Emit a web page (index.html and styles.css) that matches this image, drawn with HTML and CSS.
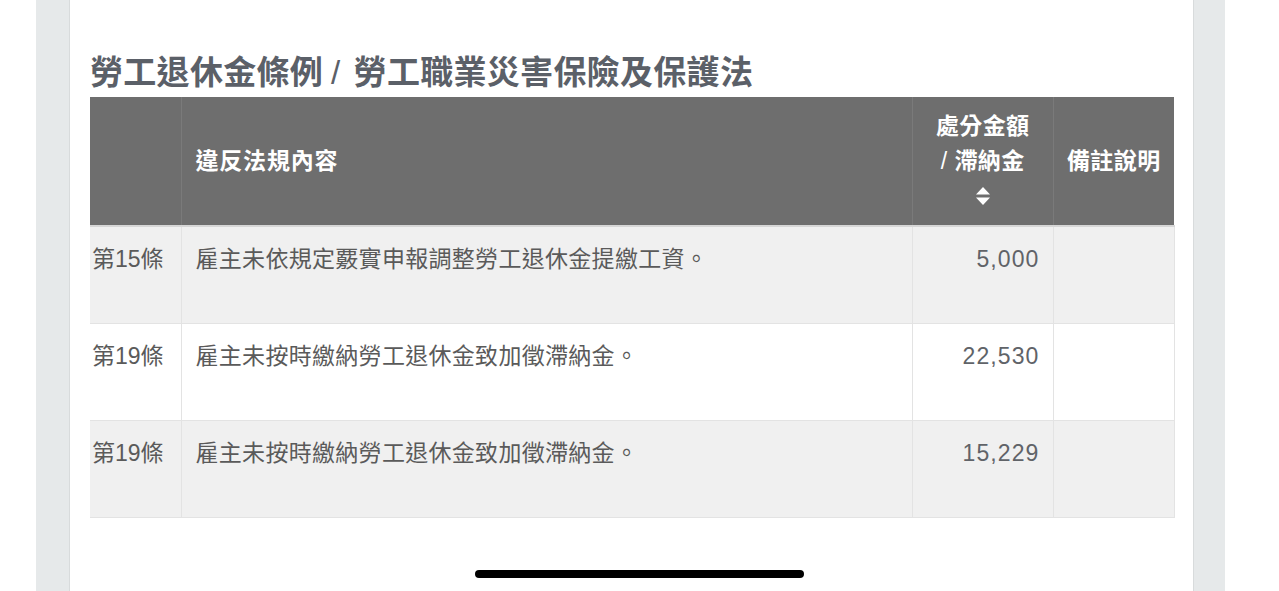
FILE: index.html
```html
<!DOCTYPE html>
<html lang="zh-Hant">
<head>
<meta charset="utf-8">
<title>勞工退休金條例 / 勞工職業災害保險及保護法</title>
<link rel="stylesheet" href="styles.css">
</head>
<body>
<div class="page">
  <div class="gutter-white"></div>
  <div class="strip"></div>
  <main class="card">
    <h2 class="title">勞工退休金條例<span class="sep">/</span>勞工職業災害保險及保護法</h2>
    <table class="penalty">
      <colgroup>
        <col class="c-art"><col class="c-desc"><col class="c-amt"><col class="c-note">
      </colgroup>
      <thead>
        <tr>
          <th class="h-art"></th>
          <th class="h-desc">違反法規內容</th>
          <th class="h-amt"><span class="amt-label">處分金額<br><span class="slash">/</span> 滯納金<br><svg class="sort" width="14" height="18" viewBox="0 0 14 18"><path d="M7 0 L14 7.5 H0 Z" fill="#fff"/><path d="M0 10.5 H14 L7 18 Z" fill="#fff"/></svg></span></th>
          <th class="h-note">備註說明</th>
        </tr>
      </thead>
      <tbody>
        <tr class="shade">
          <td class="art">第15條</td>
          <td class="desc">雇主未依規定覈實申報調整勞工退休金提繳工資。</td>
          <td class="amt">5,000</td>
          <td class="note"></td>
        </tr>
        <tr>
          <td class="art">第19條</td>
          <td class="desc">雇主未按時繳納勞工退休金致加徵滯納金。</td>
          <td class="amt">22,530</td>
          <td class="note"></td>
        </tr>
        <tr class="shade">
          <td class="art">第19條</td>
          <td class="desc">雇主未按時繳納勞工退休金致加徵滯納金。</td>
          <td class="amt">15,229</td>
          <td class="note"></td>
        </tr>
      </tbody>
    </table>
  </main>
  <div class="strip strip-right"></div>
  <div class="gutter-white"></div>
</div>
<div class="home-indicator"></div>
</body>
</html>
```
FILE: styles.css
```css
html, body {
  margin: 0;
  padding: 0;
  background: #ffffff;
  height: 591px;
  overflow: hidden;
}
body {
  font-family: "Liberation Sans", "Noto Sans CJK TC", sans-serif;
}
.page {
  display: flex;
  height: 591px;
}
.gutter-white {
  width: 36px;
  flex: none;
  background: #ffffff;
}
.gutter-white:last-child {
  flex: 1;
}
.strip {
  width: 33px;
  flex: none;
  background: #e6e9ea;
  border-right: 1px solid #d8dbdc;
}
.strip-right {
  width: 31px;
  border-right: none;
  border-left: 1px solid #d8dbdc;
}
.card {
  width: 1123px;
  flex: none;
  background: #ffffff;
  padding: 52px 19px 0 20px;
  box-sizing: border-box;
}
.title {
  margin: 0 0 4px 0;
  font-size: 33px;
  line-height: 41px;
  font-weight: 700;
  color: #5b6068;
  white-space: nowrap;
  letter-spacing: 0.3px;
}
.title .sep {
  font-weight: 400;
  padding: 0 13px 0 8px;
}
.penalty {
  width: 1084px;
  border-collapse: collapse;
  table-layout: fixed;
  font-size: 23px;
}
.c-art { width: 91px; }
.c-desc { width: 731px; }
.c-amt { width: 141px; }
.c-note { width: 121px; }
.penalty thead tr {
  height: 129px;
}
.penalty th {
  background: #6e6e6e;
  color: #ffffff;
  font-weight: 700;
  letter-spacing: 0.8px;
  line-height: 34.5px;
  vertical-align: middle;
  padding: 0 14px;
  border-left: 1px solid #7a7a7a;
  border-bottom: 2px solid #d6d6d6;
}
.penalty th.h-art { border-left: none; }
.penalty th.h-desc { text-align: left; }
.penalty th.h-amt {
  text-align: right;
  padding-right: 23px;
  letter-spacing: 0.4px;
}
.amt-label {
  display: inline-block;
  text-align: center;
}
.slash {
  font-weight: 400;
}
.sort {
  vertical-align: -2px;
}
.penalty th.h-note { text-align: center; padding: 0; letter-spacing: 0.4px; }
.penalty td {
  height: 97px;
  box-sizing: border-box;
  vertical-align: top;
  padding: 15px 14px 0 14px;
  line-height: 35px;
  color: #5a5a5a;
  border: 1px solid #e3e3e3;
  background: #ffffff;
}
.penalty tr.shade td {
  background: #f0f0f0;
}
.penalty td.desc {
  letter-spacing: 0.3px;
}
.penalty td.art {
  padding-left: 2px;
  padding-right: 0;
  border-left: none;
  white-space: nowrap;
}
.penalty td.amt {
  text-align: right;
  color: #606368;
  letter-spacing: 1.1px;
  padding-right: 13px;
}
.home-indicator {
  position: absolute;
  left: 475px;
  top: 570px;
  width: 329px;
  height: 8px;
  border-radius: 4px;
  background: #000000;
}
```
